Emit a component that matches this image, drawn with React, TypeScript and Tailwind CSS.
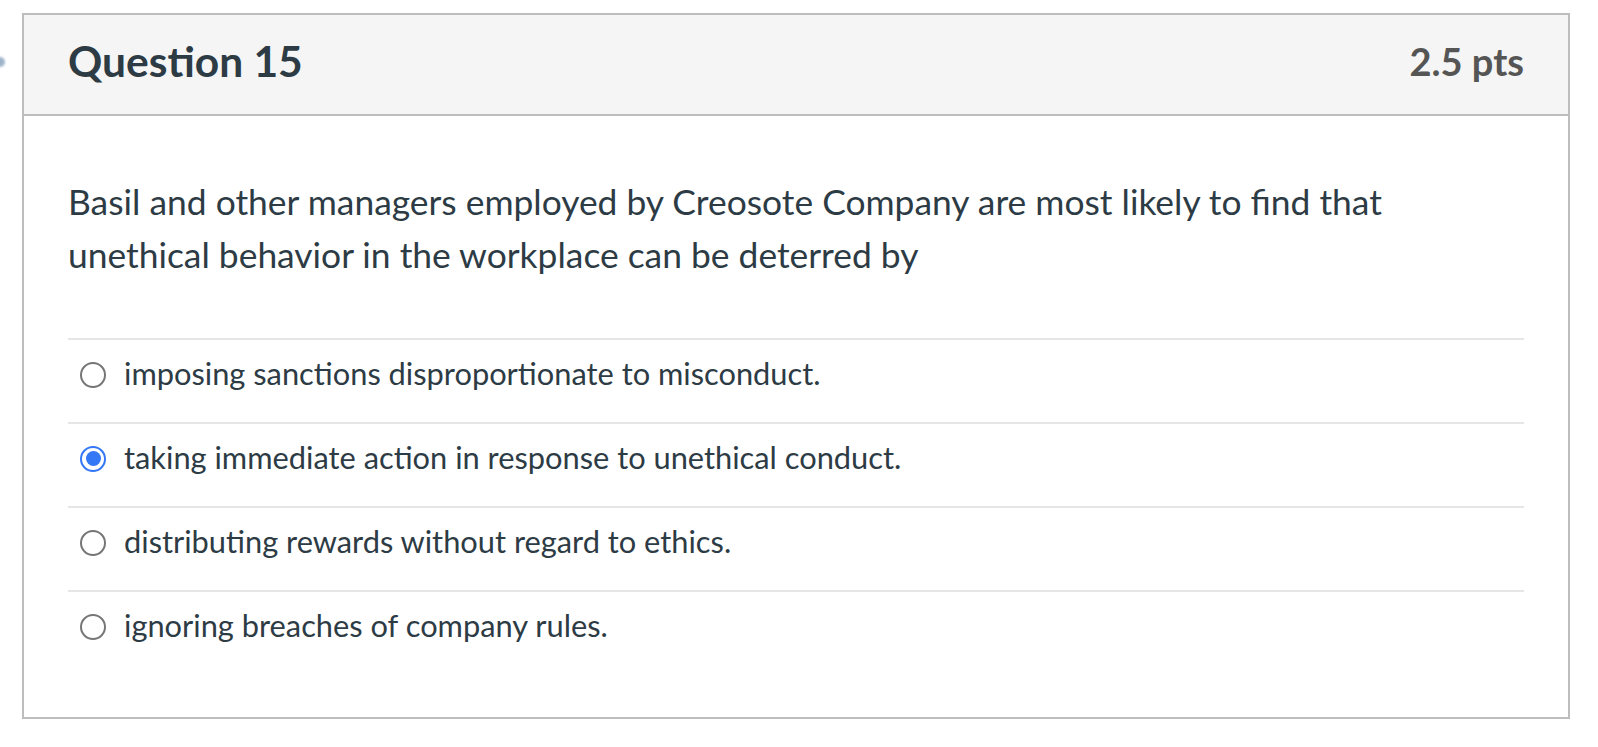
import React from "react";

const options = [
  { text: "imposing sanctions disproportionate to misconduct.", checked: false },
  { text: "taking immediate action in response to unethical conduct.", checked: true },
  { text: "distributing rewards without regard to ethics.", checked: false },
  { text: "ignoring breaches of company rules.", checked: false },
];

function Radio({ checked }: { checked: boolean }) {
  if (checked) {
    return (
      <div className="w-[26px] h-[26px] rounded-full border-[2.5px] border-[#3478f6] bg-white flex items-center justify-center shrink-0">
        <div className="w-[15px] h-[15px] rounded-full bg-[#3478f6]" />
      </div>
    );
  }
  return <div className="w-[26px] h-[26px] rounded-full border-[2.5px] border-[#767676] bg-white shrink-0" />;
}

export default function App() {
  return (
    <div
      className="relative w-full h-[747px] bg-white overflow-hidden"
      style={{ fontFamily: "Lato, 'Open Sans', sans-serif" }}
    >
      <div className="absolute left-[-5px] top-[57px] w-[10px] h-[10px] rounded-full bg-[#9fb4ca] blur-[1px]" />
      <div className="ml-[22px] mt-[13px] w-[1548px] border-2 border-[#bdbdbd] bg-white">
        <div className="h-[101px] bg-[#f5f5f5] border-b-2 border-[#bdbdbd] flex items-center justify-between pl-[44px] pr-[44px] pb-[7px]">
          <h2 className="text-[42.5px] font-bold text-[#2d3b45] leading-none">Question 15</h2>
          <div className="text-[38px] font-bold text-[#555555] leading-none">2.5 pts</div>
        </div>
        <div className="px-[44px] pt-[59px] pb-[43px]">
          <p className="text-[35.4px] leading-[53px] text-[#2d3b45] mb-[57px]">
            Basil and other managers employed by Creosote Company are most likely to find that
            <br />
            unethical behavior in the workplace can be deterred by
          </p>
          <div className="flex flex-col">
            {options.map((o) => (
              <div
                key={o.text}
                className="h-[84px] border-t-2 border-[#e6e6e6] flex items-center pl-[12px] gap-[18px] pb-[13px]"
              >
                <Radio checked={o.checked} />
                <span className="text-[30.8px] text-[#2d3b45] leading-none">{o.text}</span>
              </div>
            ))}
          </div>
        </div>
      </div>
    </div>
  );
}
